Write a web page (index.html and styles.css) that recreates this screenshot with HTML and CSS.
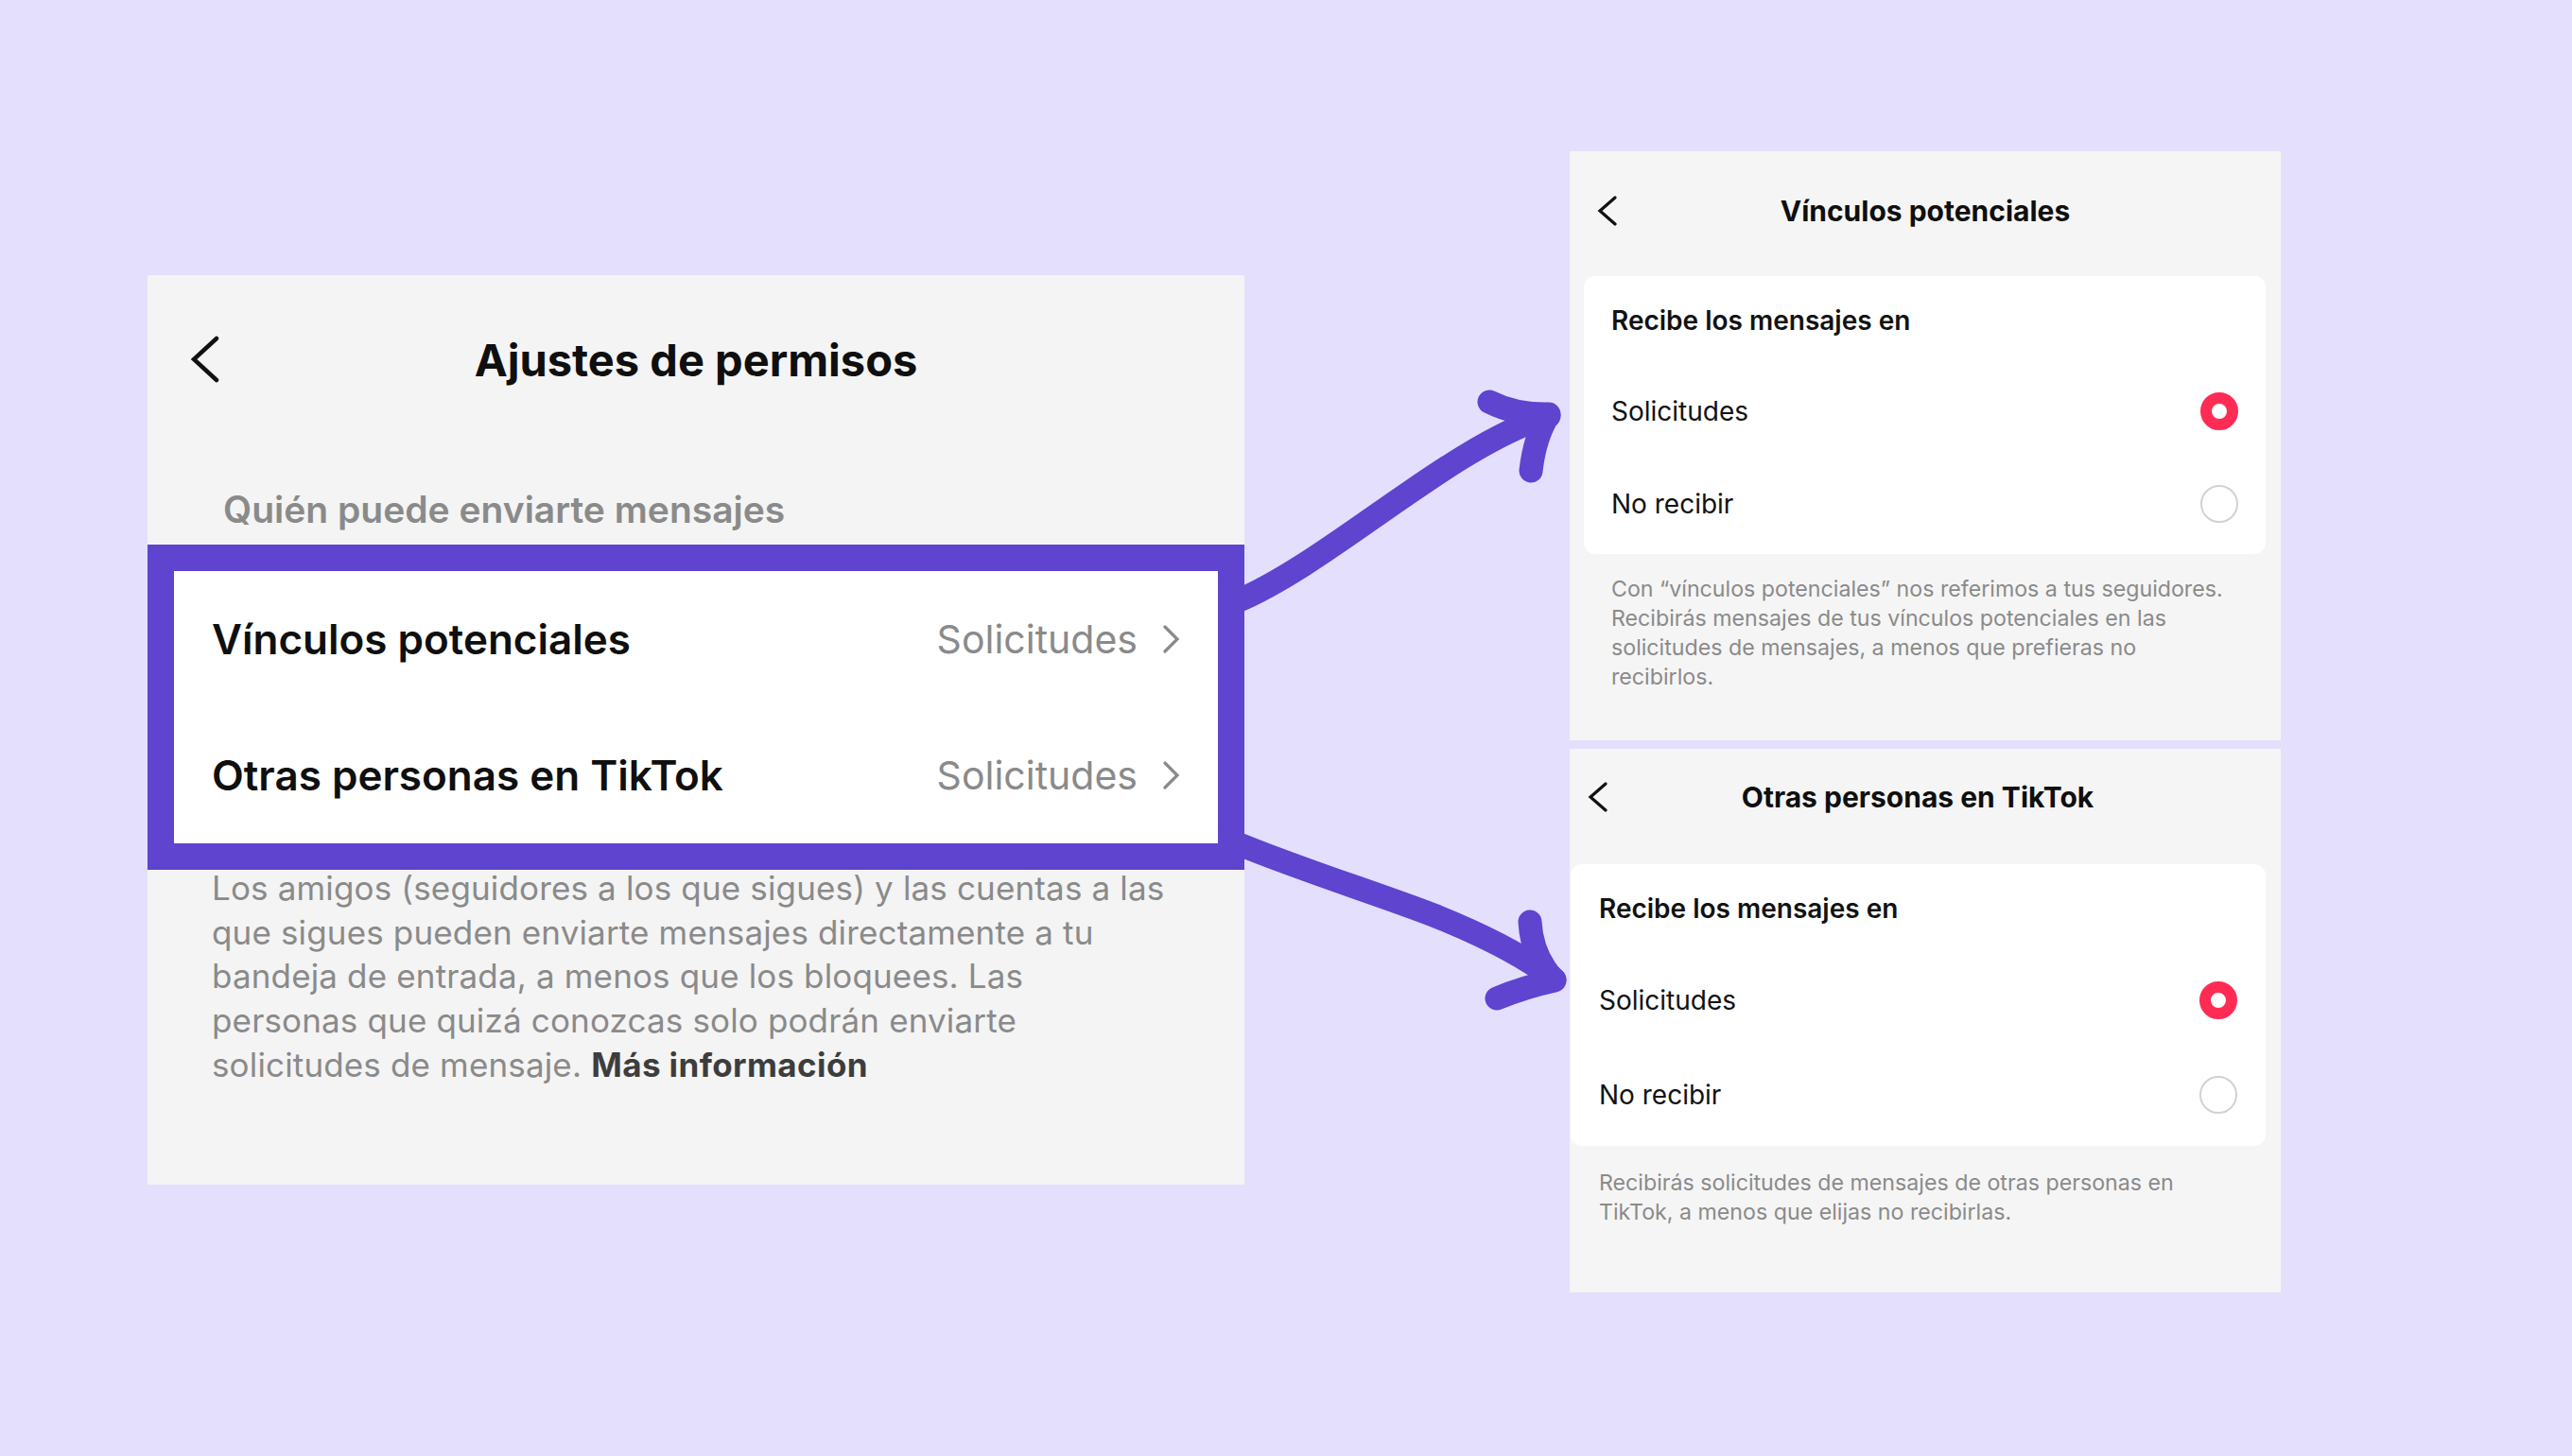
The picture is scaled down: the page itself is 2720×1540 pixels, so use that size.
FILE: index.html
```html
<!DOCTYPE html>
<html lang="es">
<head>
    <meta charset="UTF-8">
    <meta name="viewport" content="width=device-width, initial-scale=1.0">
    <title>Ajustes de permisos - Mensajes</title>
    <link rel="stylesheet" href="styles.css">
</head>
<body>
    <main class="stage">
        <!-- Main settings screen -->
        <section class="settings">
            <header class="settings-header">
                <svg class="back-icon" width="30" height="50" viewBox="0 0 30 50">
                    <path d="M27 3 L3 25 L27 47" />
                </svg>
                <h1 class="settings-title">Ajustes de permisos</h1>
            </header>

            <p class="section-label">Quién puede enviarte mensajes</p>

            <div class="highlight">
                <div class="option-row">
                    <span class="option-name">Vínculos potenciales</span>
                    <span class="option-value">
                        Solicitudes
                        <svg class="next-icon" width="20" height="30" viewBox="0 0 20 30">
                            <path d="M4 2 L17 15 L4 28" />
                        </svg>
                    </span>
                </div>
                <div class="option-row">
                    <span class="option-name">Otras personas en TikTok</span>
                    <span class="option-value">
                        Solicitudes
                        <svg class="next-icon" width="20" height="30" viewBox="0 0 20 30">
                            <path d="M4 2 L17 15 L4 28" />
                        </svg>
                    </span>
                </div>
            </div>

            <p class="settings-note">
                Los amigos (seguidores a los que sigues) y las cuentas a las que sigues pueden enviarte mensajes directamente a tu bandeja de entrada, a menos que los bloquees. Las personas que quizá conozcas solo podrán enviarte solicitudes de mensaje. <strong>Más información</strong>
            </p>
        </section>

        <!-- Hand drawn arrows -->
        <svg class="arrows" width="344" height="1000" viewBox="0 0 344 1000">
            <path d="M -8 476 C 90 435, 220 310, 322 280" />
            <path d="M 259 265 Q 287 279 322 278 Q 307 302 303 338" />
            <path d="M -8 732 C 60 760, 140 785, 200 808 C 250 828, 295 850, 328 876" />
            <path d="M 302 815 Q 304 852 328 877 Q 296 884 267 896" />
        </svg>

        <!-- Detail screens -->
        <div class="detail-column">
            <section class="sheet">
                <header class="sheet-header">
                    <svg class="back-icon small" width="22" height="32" viewBox="0 0 22 32">
                        <path d="M19 2 L3 16 L19 30" />
                    </svg>
                    <h2 class="sheet-title">Vínculos potenciales</h2>
                </header>
                <div class="choice-card">
                    <div class="choice-heading">Recibe los mensajes en</div>
                    <div class="choice-row">
                        <span>Solicitudes</span>
                        <span class="radio radio-on"></span>
                    </div>
                    <div class="choice-row">
                        <span>No recibir</span>
                        <span class="radio"></span>
                    </div>
                </div>
                <p class="sheet-note">Con “vínculos potenciales” nos referimos a tus seguidores. Recibirás mensajes de tus vínculos potenciales en las solicitudes de mensajes, a menos que prefieras no recibirlos.</p>
            </section>

            <section class="sheet sheet-other">
                <header class="sheet-header">
                    <svg class="back-icon small" width="22" height="32" viewBox="0 0 22 32">
                        <path d="M19 2 L3 16 L19 30" />
                    </svg>
                    <h2 class="sheet-title">Otras personas en TikTok</h2>
                </header>
                <div class="choice-card">
                    <div class="choice-heading">Recibe los mensajes en</div>
                    <div class="choice-row">
                        <span>Solicitudes</span>
                        <span class="radio radio-on"></span>
                    </div>
                    <div class="choice-row">
                        <span>No recibir</span>
                        <span class="radio"></span>
                    </div>
                </div>
                <p class="sheet-note">Recibirás solicitudes de mensajes de otras personas en TikTok, a menos que elijas no recibirlas.</p>
            </section>
        </div>
    </main>
</body>
</html>
```

FILE: styles.css
```css
/* General Styles */
body {
    margin: 0;
    padding: 0;
    background-color: #e3dffd;
    font-family: Inter, "Noto Sans", sans-serif;
    color: #121212;
}

.stage {
    display: flex;
    align-items: flex-start;
    width: 2720px;
    height: 1540px;
    padding: 160px 0 0 156px;
    box-sizing: border-box;
}

h1, h2, p {
    margin: 0;
}

.back-icon path,
.next-icon path {
    fill: none;
    stroke-linecap: round;
    stroke-linejoin: miter;
}

.back-icon path {
    stroke: #111;
    stroke-width: 4.5;
}

.back-icon.small path {
    stroke-width: 3.2;
}

/* Main settings screen */
.settings {
    width: 1160px;
    height: 962px;
    margin-top: 131px;
    background-color: #f4f4f4;
}

.settings-header {
    display: grid;
    grid-template-columns: 1fr auto 1fr;
    align-items: center;
    height: 178px;
    padding: 0 46px;
}

.settings-title {
    font-size: 47px;
    font-weight: 700;
    color: #0f0f0f;
}

.section-label {
    padding: 48px 0 15px 80px;
    font-size: 39px;
    line-height: 44px;
    font-weight: 600;
    color: #8a8a8a;
}

.highlight {
    border: 28px solid #5e44cf;
    background-color: #fff;
}

.option-row {
    display: flex;
    justify-content: space-between;
    align-items: center;
    height: 144px;
    padding: 0 40px;
}

.option-name {
    font-size: 44px;
    font-weight: 600;
    color: #0f0f0f;
}

.option-value {
    display: flex;
    align-items: center;
    gap: 25px;
    font-size: 41px;
    color: #8a8a8a;
}

.next-icon path {
    stroke: #8a8a8a;
    stroke-width: 3.2;
}

.settings-note {
    width: 1016px;
    margin-top: -4px;
    padding-left: 68px;
    font-size: 35px;
    line-height: 46.7px;
    letter-spacing: 0.15px;
    color: #8a8a8a;
}

.settings-note strong {
    font-weight: 700;
    letter-spacing: 0.4px;
    color: #3d3d3d;
}

/* Arrows */
.arrows {
    flex-shrink: 0;
    overflow: visible;
}

.arrows path {
    fill: none;
    stroke: #5e44cf;
    stroke-width: 25;
    stroke-linecap: round;
    stroke-linejoin: round;
}

/* Detail screens */
.detail-column {
    display: flex;
    flex-direction: column;
    gap: 9px;
    width: 752px;
}

.sheet {
    height: 623px;
    background-color: #f5f5f5;
}

.sheet-header {
    display: grid;
    grid-template-columns: 1fr auto 1fr;
    align-items: center;
    height: 126px;
    padding: 0 29px;
}

.sheet-title {
    font-size: 30px;
    font-weight: 700;
    color: #0f0f0f;
}

.choice-card {
    margin: 6px 16px 0 15px;
    padding: 0 29px 4px;
    background-color: #fff;
    border-radius: 12px;
}

.choice-heading {
    display: flex;
    align-items: center;
    height: 94px;
    font-size: 28px;
    font-weight: 600;
}

.choice-row {
    display: flex;
    justify-content: space-between;
    align-items: center;
    height: 98px;
    font-size: 28px;
}

.radio {
    width: 40px;
    height: 40px;
    box-sizing: border-box;
    border: 2px solid #d2d2d2;
    border-radius: 50%;
}

.radio-on {
    border: 12px solid #fe2c55;
}

.sheet-note {
    padding: 22px 40px 0 44px;
    font-size: 23.2px;
    line-height: 31px;
    color: #8a8a8a;
}

/* Second detail screen is cropped a bit differently */
.sheet-other {
    height: 575px;
}

.sheet-other .sheet-header {
    height: 102px;
    padding: 0 35px 0 19px;
}

.sheet-other .choice-card {
    margin: 20px 16px 0 1px;
    padding: 0 30px 4px;
}

.sheet-other .choice-row {
    height: 100px;
}

.sheet-other .sheet-note {
    padding: 24px 46px 0 31px;
}
```
